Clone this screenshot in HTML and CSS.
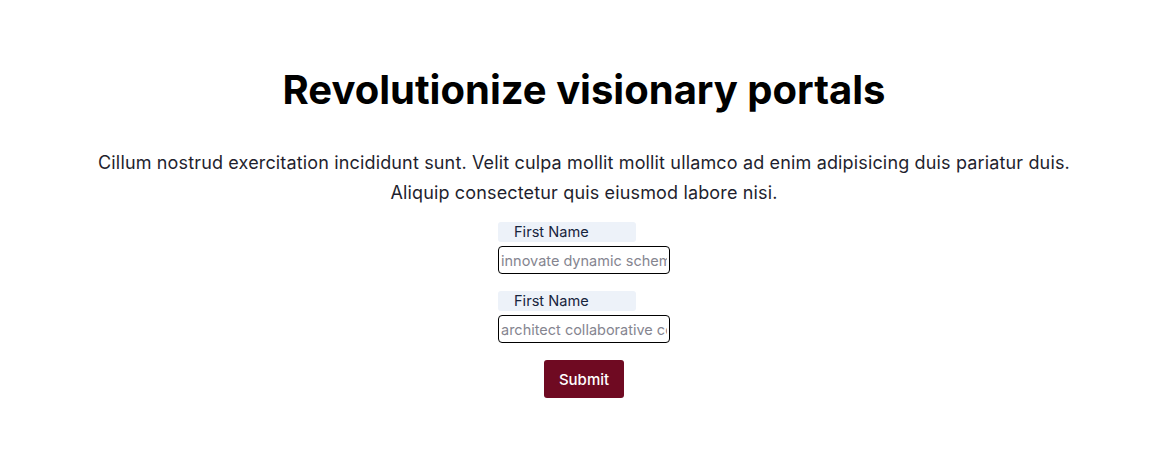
FILE: index.html
```html
<!DOCTYPE html>
<html lang="en">
<head>
<meta charset="utf-8">
<title>Revolutionize visionary portals</title>
<link rel="stylesheet" href="styles.css">
</head>
<body>
<main class="hero">
  <h1 class="title">Revolutionize visionary portals</h1>
  <p class="lead">Cillum nostrud exercitation incididunt sunt. Velit culpa mollit mollit ullamco ad enim adipisicing duis pariatur duis. Aliquip consectetur quis eiusmod labore nisi.</p>
  <form class="form">
    <div class="field">
      <label class="label" for="f1">First Name</label>
      <input class="input" id="f1" type="text" placeholder="innovate dynamic schemas">
    </div>
    <div class="field">
      <label class="label" for="f2">First Name</label>
      <input class="input" id="f2" type="text" placeholder="architect collaborative content">
    </div>
    <button class="button" type="button">Submit</button>
  </form>
</main>
</body>
</html>
```
FILE: styles.css
```css
html, body {
  margin: 0;
  padding: 0;
  background: #ffffff;
}
body {
  font-family: Inter, "Noto Sans", sans-serif;
  color: #111;
}
.hero {
  display: flex;
  flex-direction: column;
  align-items: center;
  padding: 64px 80px 0;
  text-align: center;
}
.title {
  margin: 0;
  font-size: 40px;
  line-height: 52px;
  font-weight: 700;
  color: #000;
}
.lead {
  margin: 32px 0 14px;
  max-width: 1000px;
  font-size: 18px;
  line-height: 30px;
  letter-spacing: 0.15px;
  color: #1f1f2e;
}
.form {
  display: flex;
  flex-direction: column;
  align-items: center;
  width: 172px;
}
.field {
  display: flex;
  flex-direction: column;
  align-items: flex-start;
  width: 100%;
  margin-bottom: 17px;
}
.label {
  box-sizing: border-box;
  width: 138px;
  height: 20px;
  padding-left: 16px;
  background: #edf2f9;
  border-radius: 3px;
  font-size: 14.6px;
  line-height: 20px;
  color: #17243d;
  text-align: left;
  margin-bottom: 4px;
}
.input {
  box-sizing: border-box;
  width: 172px;
  height: 28px;
  padding: 0 2px;
  border: 1px solid #000;
  border-radius: 4px;
  font-family: Inter, "Noto Sans", sans-serif;
  font-size: 14.5px;
  color: #111;
  outline: none;
}
.input::placeholder {
  color: #858590;
}
.button {
  width: 80px;
  height: 38px;
  margin-top: 0;
  border: none;
  border-radius: 3px;
  background: #6f0a22;
  color: #fff;
  font-family: Inter, "Noto Sans", sans-serif;
  font-size: 15px;
  font-weight: 500;
  cursor: pointer;
}
```
